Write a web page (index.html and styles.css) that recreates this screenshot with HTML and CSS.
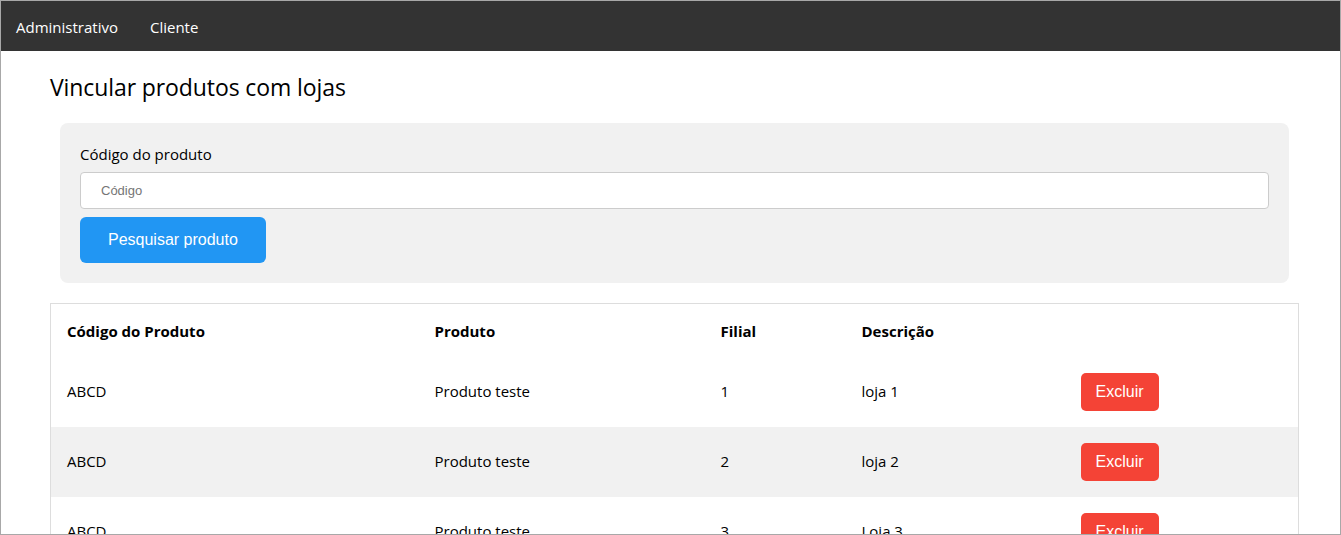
FILE: index.html
```html
<!DOCTYPE html>
<html lang="pt">
<head>
<meta charset="utf-8">
<title>Vincular produtos com lojas</title>
<link rel="stylesheet" href="styles.css">
</head>
<body>
<div class="frame"></div>
<nav class="navbar">
  <a class="nav-item" href="#">Administrativo</a>
  <a class="nav-item" href="#">Cliente</a>
</nav>
<main class="page">
  <h3 class="title">Vincular produtos com lojas</h3>
  <section class="panel">
    <label class="label" for="codigo">Código do produto</label>
    <input class="input" id="codigo" type="text" placeholder="Código">
    <button class="btn btn-blue" type="button">Pesquisar produto</button>
  </section>
  <table class="table">
    <colgroup>
      <col class="c1"><col class="c2"><col class="c3"><col class="c4"><col class="c5">
    </colgroup>
    <thead>
      <tr><th>Código do Produto</th><th>Produto</th><th>Filial</th><th>Descrição</th><th></th></tr>
    </thead>
    <tbody>
      <tr><td>ABCD</td><td>Produto teste</td><td>1</td><td>loja 1</td><td><button class="btn btn-red" type="button">Excluir</button></td></tr>
      <tr><td>ABCD</td><td>Produto teste</td><td>2</td><td>loja 2</td><td><button class="btn btn-red" type="button">Excluir</button></td></tr>
      <tr><td>ABCD</td><td>Produto teste</td><td>3</td><td>Loja 3</td><td><button class="btn btn-red" type="button">Excluir</button></td></tr>
    </tbody>
  </table>
</main>
</body>
</html>
```
FILE: styles.css
```css
html, body {
  margin: 0;
  padding: 0;
}
body {
  font-family: "Open Sans", "Noto Sans", sans-serif;
  font-size: 15px;
  line-height: 1.5;
  color: #000;
  background: #fff;
}
.frame {
  position: fixed;
  inset: 0;
  border: 1px solid #a8a8a8;
  pointer-events: none;
  z-index: 10;
}
.navbar {
  display: flex;
  background: #333;
  height: 51px;
  align-items: center;
}
.nav-item {
  color: #fff;
  text-decoration: none;
  padding: 3px 16px 0;
  line-height: 48px;
}
.page {
  padding: 0 42px 0 50px;
}
.title {
  margin: 0;
  padding-top: 22px;
  font-size: 23px;
  letter-spacing: -0.1px;
  font-weight: 400;
  line-height: 28px;
  height: 50px;
}
.panel {
  margin: 0 10px;
  background: #f1f1f1;
  border-radius: 8px;
  padding: 19px 20px 20px;
  display: flex;
  flex-direction: column;
  align-items: flex-start;
}
.label {
  line-height: 24px;
  margin-bottom: 6px;
}
.input {
  box-sizing: border-box;
  width: 100%;
  height: 37px;
  border: 1px solid #ccc;
  border-radius: 4px;
  background: #fff;
  padding: 0 20px;
  font-family: "Liberation Sans", Arial, sans-serif;
  font-size: 13px;
  margin: 0 0 8px;
}
.input::placeholder {
  color: #757575;
}
.btn {
  border: none;
  color: #fff;
  font-family: "Liberation Sans", Arial, sans-serif;
  font-size: 16px;
  line-height: 18px;
  cursor: pointer;
}
.btn-blue {
  background: #2196f3;
  padding: 14px 28px;
  border-radius: 6px;
}
.btn-red {
  background: #f44336;
  padding: 10px 15px;
  border-radius: 5px;
}
.table {
  margin-top: 20px;
  width: 1248px;
  border-collapse: collapse;
  border: 1px solid #ddd;
  table-layout: fixed;
}
.c1 { width: 368px; }
.c2 { width: 286px; }
.c3 { width: 141px; }
.c4 { width: 219px; }
.c5 { width: 234px; }
.table th {
  text-align: left;
  font-weight: 700;
  padding: 16px 16px 14px;
  height: 22px;
}
.table td {
  padding: 0 16px;
  height: 70px;
}
.table tbody tr:nth-child(even) {
  background: #f1f1f1;
}
```
